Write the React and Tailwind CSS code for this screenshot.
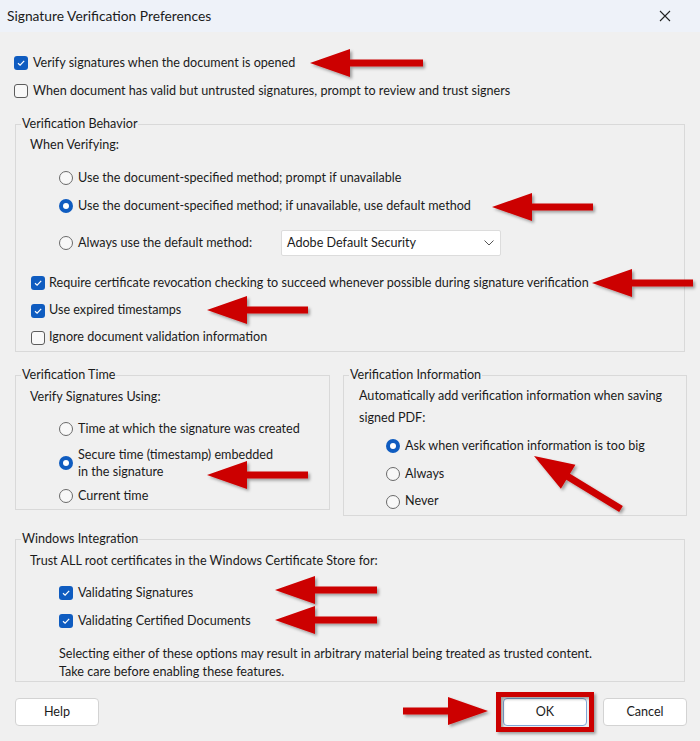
import React from 'react';

const arrows = [
  [310, 63, 423, 63],
  [492, 207, 593, 207],
  [592, 283, 693, 283],
  [207, 310, 308, 310],
  [207, 475, 308, 475],
  [534, 456, 621, 509],
  [275, 590, 377, 590],
  [275, 620, 377, 620],
  [488, 711, 403, 711],
];

function arrowPoints([tx, ty, ex, ey]) {
  const len = Math.hypot(ex - tx, ey - ty);
  const ux = (ex - tx) / len, uy = (ey - ty) / len;
  const px = -uy, py = ux;
  const head = 40, hw = 14, sw = 3.5;
  const bx = tx + ux * head, by = ty + uy * head;
  const pts = [
    [tx, ty],
    [bx + px * hw, by + py * hw],
    [bx + px * sw, by + py * sw],
    [ex + px * sw, ey + py * sw],
    [ex - px * sw, ey - py * sw],
    [bx - px * sw, by - py * sw],
    [bx - px * hw, by - py * hw],
  ];
  return pts.map(p => p.join(',')).join(' ');
}

function Check({ checked }) {
  return checked ? (
    <span className="w-[14px] h-[14px] rounded-[3px] bg-[#0f5cc0] flex items-center justify-center shrink-0">
      <svg width="10" height="10" viewBox="0 0 10 10">
        <path d="M2 5.2 L4.1 7.2 L8.2 2.8" fill="none" stroke="white" strokeWidth="1.2" />
      </svg>
    </span>
  ) : (
    <span className="w-[14px] h-[14px] rounded-[3px] border border-[#5c5c5c] bg-[#f8f8f8] shrink-0" />
  );
}

function Radio({ checked }) {
  return checked ? (
    <span className="w-[14px] h-[14px] rounded-full bg-[#0f5cc0] flex items-center justify-center shrink-0">
      <span className="w-[6px] h-[6px] rounded-full bg-white" />
    </span>
  ) : (
    <span className="w-[14px] h-[14px] rounded-full border border-[#6a6a6a] bg-[#f8f8f8] shrink-0" />
  );
}

function Row({ children, h = 'h-[28px]', className = '' }) {
  return <div className={`flex items-center ${h} ${className}`}>{children}</div>;
}

function Group({ title, className = '', children }) {
  return (
    <fieldset className={`border border-[#d9d9d9] pl-[5px] min-w-0 ${className}`}>
      <legend className="px-px leading-[16px]">{title}</legend>
      {children}
    </fieldset>
  );
}

function Button({ children }) {
  return (
    <button className="w-[84px] h-[28px] bg-white border border-[#d3d3d3] rounded-[4px] text-[#1b1b1b]">{children}</button>
  );
}

export default function App() {
  return (
    <div className="relative w-[700px] h-[741px] bg-[#f0f0f0] text-[12.6px] text-[#1b1b1b] font-['Lato','Liberation_Sans',sans-serif] overflow-hidden">
      {/* Title bar */}
      <div className="h-[32px] bg-[#eef2f9] flex items-center justify-between pl-[7px] pr-[29px]">
        <span className="text-[13.8px]">Signature Verification Preferences</span>
        <svg width="12" height="12" viewBox="0 0 12 12">
          <path d="M1 1 L11 11 M11 1 L1 11" stroke="#222" strokeWidth="1.1" />
        </svg>
      </div>

      <div className="px-[15px] pt-[17px]">
        <Row className="-ml-px gap-[5px]"><Check checked /><span>Verify signatures when the document is opened</span></Row>
        <Row className="-ml-px gap-[5px]"><Check /><span>When document has valid but untrusted signatures, prompt to review and trust signers</span></Row>

        <Group title="Verification Behavior" className="mt-[11px]">
          <Row h="h-[20px]" className="mt-[3px] ml-[9px]">When Verifying:</Row>
          <Row className="mt-[9px] ml-[38px] gap-[5px]"><Radio /><span>Use the document-specified method; prompt if unavailable</span></Row>
          <Row className="ml-[38px] gap-[5px]"><Radio checked /><span>Use the document-specified method; if unavailable, use default method</span></Row>
          <Row className="mt-[9px] ml-[38px]">
            <div className="w-[222px] flex items-center gap-[5px]"><Radio /><span>Always use the default method:</span></div>
            <div className="w-[220px] h-[26px] bg-white border border-[#dcdcdc] rounded-[2px] flex items-center justify-between pl-[5px] pr-[6px]">
              <span>Adobe Default Security</span>
              <svg width="10" height="6" viewBox="0 0 10 6">
                <path d="M0.5 0.5 L5 5 L9.5 0.5" fill="none" stroke="#555" strokeWidth="1" />
              </svg>
            </div>
          </Row>
          <Row className="mt-[12px] ml-[10px] gap-[4px]"><Check checked /><span>Require certificate revocation checking to succeed whenever possible during signature verification</span></Row>
          <Row h="h-[27px]" className="ml-[10px] gap-[4px]"><Check checked /><span>Use expired timestamps</span></Row>
          <Row h="h-[27px]" className="ml-[10px] gap-[4px]"><Check /><span>Ignore document validation information</span></Row>
        </Group>

        <div className="grid grid-cols-[315px_344px] gap-[13px] items-start mt-[15px]">
          <Group title="Verification Time">
            <Row h="h-[20px]" className="mt-[4px] ml-[9px]">Verify Signatures Using:</Row>
            <Row className="mt-[8px] ml-[38px] gap-[5px]"><Radio /><span>Time at which the signature was created</span></Row>
            <div className="mt-[3px] ml-[38px] flex items-center gap-[5px]">
              <Radio checked />
              <span className="leading-[17px]">Secure time (timestamp) embedded<br />in the signature</span>
            </div>
            <Row h="h-[26px]" className="mt-[3px] ml-[38px] gap-[5px]"><Radio /><span>Current time</span></Row>
          </Group>

          <Group title="Verification Information">
            <div className="mt-[2px] ml-[10px] leading-[22px]">Automatically add verification information when saving<br />signed PDF:</div>
            <Row className="mt-[3px] ml-[37px] gap-[5px]"><Radio checked /><span>Ask when verification information is too big</span></Row>
            <Row className="ml-[37px] gap-[5px]"><Radio /><span>Always</span></Row>
            <Row h="h-[27px]" className="ml-[37px] gap-[5px]"><Radio /><span>Never</span></Row>
          </Group>
        </div>

        <Group title="Windows Integration" className="mt-[15px]">
          <Row h="h-[20px]" className="mt-[4px] ml-[9px]">Trust ALL root certificates in the Windows Certificate Store for:</Row>
          <Row className="mt-[8px] ml-[38px] gap-[5px]"><Check checked /><span>Validating Signatures</span></Row>
          <Row className="ml-[38px] gap-[5px]"><Check checked /><span>Validating Certified Documents</span></Row>
          <p className="mt-[10px] ml-[38px] leading-[18px]">
            Selecting either of these options may result in arbitrary material being treated as trusted content.<br />
            Take care before enabling these features.
          </p>
        </Group>

        <div className="flex justify-between mt-[16px]">
          <Button>Help</Button>
          <div className="flex gap-[16px] mr-[-2px]">
            <button className="w-[84px] h-[28px] bg-white border border-[#7fa6d6] rounded-[4px] text-[#1b1b1b]">OK</button>
            <Button>Cancel</Button>
          </div>
        </div>
      </div>

      {/* Red annotation arrows */}
      <svg className="absolute inset-0 pointer-events-none" width="700" height="741">
        <defs>
          <filter id="sh" x="-20%" y="-20%" width="140%" height="140%">
            <feDropShadow dx="2" dy="2" stdDeviation="1.5" floodColor="#000" floodOpacity="0.35" />
          </filter>
        </defs>
        {arrows.map((a, i) => (
          <polygon key={i} points={arrowPoints(a)} fill="#cc0000" filter="url(#sh)" />
        ))}
        <rect x="498.5" y="694.5" width="93" height="35" fill="none" stroke="#cc0000" strokeWidth="5" filter="url(#sh)" />
      </svg>
    </div>
  );
}
